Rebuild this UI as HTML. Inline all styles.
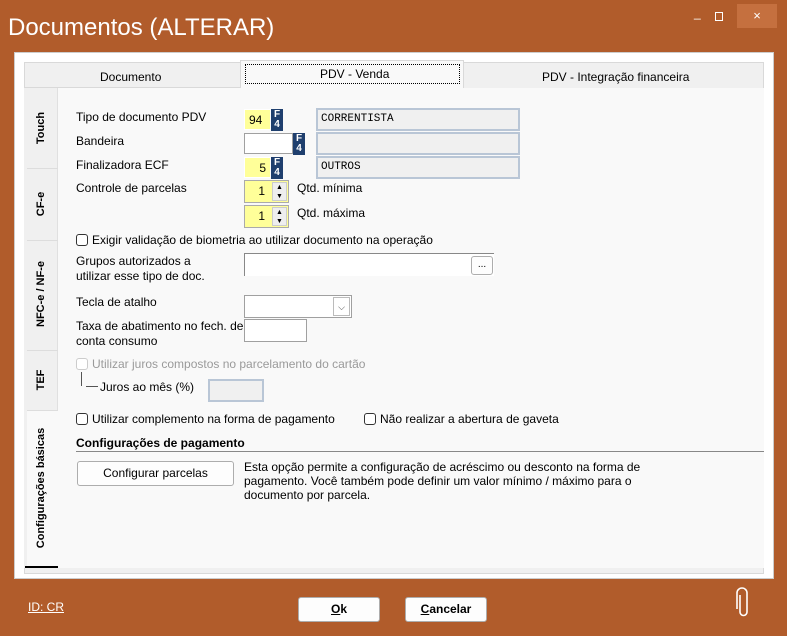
<!DOCTYPE html><html><head><style>
*{margin:0;padding:0;box-sizing:border-box}
body{width:787px;height:636px;background:#b15c2b;font-family:"Liberation Sans",sans-serif;font-size:12px;color:#000;position:relative;overflow:hidden}
.a{position:absolute}
.t{position:absolute;white-space:nowrap}
.in{position:absolute;border:1px solid #a0a0a0;background:#fff}
.y{background:#ffff99}
.ro{position:absolute;background:#f0f0f0;border:2px solid #b9c6d6;font-family:"Liberation Mono",monospace;font-size:11px;padding:3px 3px}
.f4{position:absolute;width:12px;height:22px;background:#1f3f6e;color:#fff;font-weight:bold;font-size:10px;line-height:10px;text-align:center;border:1px solid #1f3f6e}
.cb{position:absolute;width:12px;height:12px;border:1px solid #333;border-radius:3px;background:#fff}
.btn{position:absolute;background:#fdfdfd;border:1px solid #adadad;border-radius:3px;text-align:center}
.vt{position:absolute;transform:rotate(-90deg);transform-origin:center;font-weight:bold;font-size:11px;white-space:nowrap}
</style></head><body>
<div class="t" style="left:8px;top:14px;font-size:24px;color:#fff">Documentos (ALTERAR)</div>
<div class="t" style="left:694px;top:6px;color:#fff;font-size:12px">_</div>
<div class="a" style="left:715px;top:12px;width:8px;height:9px;border:1px solid #fff"></div>
<div class="a" style="left:737px;top:4px;width:40px;height:24px;background:#c5703f;color:#fff;text-align:center;font-size:13px;line-height:24px">×</div>
<div class="a" style="left:14px;top:52px;width:760px;height:527px;background:#fff;border:1px solid #ccc"></div>
<div class="a" style="left:24px;top:62px;width:740px;height:512px;background:#f0f0f0;border:1px solid #d9d9d9"></div>
<div class="a" style="left:24px;top:62px;width:217px;height:26px;background:#f0f0f0;border:1px solid #d9d9d9"></div>
<div class="t" style="left:100px;top:70px">Documento</div>
<div class="a" style="left:240px;top:60px;width:224px;height:30px;background:#f9f9f9;border:1px solid #d9d9d9;border-bottom:none"></div>
<div class="a" style="left:245px;top:64px;width:215px;height:20px;border:1px dotted #000"></div>
<div class="t" style="left:320px;top:67px">PDV - Venda</div>
<div class="t" style="left:542px;top:70px">PDV - Integração financeira</div>
<div class="a" style="left:58px;top:88px;width:706px;height:480px;background:#f9f9f9"></div>
<div class="a" style="left:24px;top:88px;width:34px;height:480px;background:#f0f0f0;border-right:1px solid #e0e0e0"></div>
<div class="a" style="left:27px;top:410px;width:31px;height:158px;background:#f9f9f9"></div>
<div class="a" style="left:27px;top:168px;width:31px;height:1px;background:#ddd"></div>
<div class="a" style="left:27px;top:240px;width:31px;height:1px;background:#ddd"></div>
<div class="a" style="left:27px;top:350px;width:31px;height:1px;background:#ddd"></div>
<div class="a" style="left:27px;top:410px;width:31px;height:1px;background:#ddd"></div>
<div class="a" style="left:25px;top:566px;width:33px;height:2px;background:#000"></div>
<div class="vt" style="left:11px;top:122px;width:60px;text-align:center">Touch</div>
<div class="vt" style="left:11px;top:198px;width:60px;text-align:center">CF-e</div>
<div class="vt" style="left:-9px;top:288px;width:100px;text-align:center">NFC-e / NF-e</div>
<div class="vt" style="left:11px;top:374px;width:60px;text-align:center">TEF</div>
<div class="vt" style="left:-29px;top:482px;width:140px;text-align:center">Configurações básicas</div>

<div class="t" style="left:76px;top:110px">Tipo de documento PDV</div>
<div class="t" style="left:76px;top:134px">Bandeira</div>
<div class="t" style="left:76px;top:158px">Finalizadora ECF</div>
<div class="t" style="left:76px;top:181px">Controle de parcelas</div>
<div class="in y" style="left:244px;top:109px;width:27px;height:21px;border-color:#fff;padding:3px 4px">94</div>
<div class="f4" style="left:271px;top:109px">F<br>4</div>
<div class="in" style="left:244px;top:133px;width:49px;height:21px"></div>
<div class="f4" style="left:293px;top:133px">F<br>4</div>
<div class="in y" style="left:244px;top:157px;width:27px;height:21px;border-color:#fff;padding:3px 4px;text-align:right">5</div>
<div class="f4" style="left:271px;top:157px">F<br>4</div>
<div class="ro" style="left:316px;top:108px;width:204px;height:23px">CORRENTISTA</div>
<div class="ro" style="left:316px;top:132px;width:204px;height:23px"></div>
<div class="ro" style="left:316px;top:156px;width:204px;height:23px">OUTROS</div>
<div class="in y" style="left:244px;top:180px;width:45px;height:23px;border-color:#aaa;padding:3px 23px 0 0;text-align:right">1</div>
<div class="a" style="left:272px;top:182px;width:15px;height:19px;background:#eee;border:1px solid #ccc;font-size:7px;line-height:9px;text-align:center">▲<br>▼</div>
<div class="in y" style="left:244px;top:205px;width:45px;height:23px;border-color:#aaa;padding:3px 23px 0 0;text-align:right">1</div>
<div class="a" style="left:272px;top:207px;width:15px;height:19px;background:#eee;border:1px solid #ccc;font-size:7px;line-height:9px;text-align:center">▲<br>▼</div>
<div class="t" style="left:297px;top:181px">Qtd. mínima</div>
<div class="t" style="left:297px;top:206px">Qtd. máxima</div>

<div class="cb" style="left:76px;top:234px"></div>
<div class="t" style="left:92px;top:233px">Exigir validação de biometria ao utilizar documento na operação</div>
<div class="t" style="left:76px;top:254px;line-height:15px">Grupos autorizados a<br>utilizar esse tipo de doc.</div>
<div class="a" style="left:244px;top:253px;width:250px;height:23px;background:#fff;border-top:1px solid #888;border-left:1px solid #888"></div>
<div class="btn" style="left:471px;top:256px;width:22px;height:19px;font-size:10px;line-height:15px">...</div>
<div class="t" style="left:76px;top:295px">Tecla de atalho</div>
<div class="in" style="left:244px;top:295px;width:108px;height:23px"></div>
<div class="a" style="left:333px;top:297px;width:17px;height:19px;border:1px solid #bbb;font-size:9px;text-align:center;line-height:18px;color:#444">⌵</div>
<div class="t" style="left:76px;top:319px;line-height:15px">Taxa de abatimento no fech. de<br>conta consumo</div>
<div class="in" style="left:244px;top:319px;width:63px;height:23px"></div>
<div class="cb" style="left:76px;top:358px;border-color:#ccc"></div>
<div class="t" style="left:92px;top:357px;color:#9a9a9a">Utilizar juros compostos no parcelamento do cartão</div>
<div class="a" style="left:81px;top:372px;width:1px;height:14px;background:#555"></div>
<div class="a" style="left:86px;top:386px;width:12px;height:1px;background:#555"></div>
<div class="t" style="left:100px;top:380px">Juros ao mês (%)</div>
<div class="a" style="left:208px;top:379px;width:56px;height:23px;background:#f0f0f0;border:2px solid #b9c6d6"></div>
<div class="cb" style="left:76px;top:413px"></div>
<div class="t" style="left:92px;top:412px">Utilizar complemento na forma de pagamento</div>
<div class="cb" style="left:364px;top:413px"></div>
<div class="t" style="left:380px;top:412px">Não realizar a abertura de gaveta</div>
<div class="t" style="left:76px;top:436px;font-weight:bold">Configurações de pagamento</div>
<div class="a" style="left:76px;top:451px;width:688px;height:1px;background:#888"></div>
<div class="btn" style="left:77px;top:461px;width:157px;height:25px;line-height:23px">Configurar parcelas</div>
<div class="t" style="left:244px;top:460px;line-height:14px">Esta opção permite a configuração de acréscimo ou desconto na forma de<br>pagamento. Você também pode definir um valor mínimo / máximo para o<br>documento por parcela.</div>

<div class="t" style="left:28px;top:600px;color:#fff;text-decoration:underline">ID: CR</div>
<div class="btn" style="left:298px;top:597px;width:82px;height:25px;line-height:23px;font-weight:bold"><u>O</u>k</div>
<div class="btn" style="left:405px;top:597px;width:82px;height:25px;line-height:23px;font-weight:bold"><u>C</u>ancelar</div>
<svg class="a" style="left:734px;top:587px" width="18" height="32" viewBox="0 0 18 32"><path d="M6 8 V25 a3.5 3.5 0 0 0 7 0 V6 a5 5 0 0 0 -10 0 V22" fill="none" stroke="#fff" stroke-width="1.6"/></svg>
</body></html>
